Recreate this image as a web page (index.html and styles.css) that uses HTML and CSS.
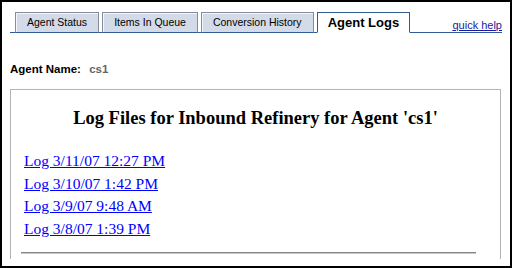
FILE: index.html
```html
<!DOCTYPE html>
<html lang="en">
<head>
    <meta charset="UTF-8">
    <title>Agent Logs</title>
    <link rel="stylesheet" href="styles.css">
</head>
<body>

<div class="frame">
    <div class="tabbar">
        <a class="tab" href="#">Agent Status</a>
        <a class="tab" href="#">Items In Queue</a>
        <a class="tab" href="#">Conversion History</a>
        <a class="tab active" href="#">Agent Logs</a>
        <a class="help" href="#">quick help</a>
    </div>
    <div class="page">
        <div class="agent-row">
            <span class="agent-label">Agent Name:</span>
            <span class="agent-value">cs1</span>
        </div>
        <div class="log-box">
            <h3>Log Files for Inbound Refinery for Agent 'cs1'</h3>
            <div class="log-list">
                <a href="#">Log 3/11/07 12:27 PM</a>
                <a href="#">Log 3/10/07 1:42 PM</a>
                <a href="#">Log 3/9/07 9:48 AM</a>
                <a href="#">Log 3/8/07 1:39 PM</a>
            </div>
            <hr>
        </div>
    </div>
</div>

</body>
</html>
```

FILE: styles.css
```css
html, body {
    margin: 0;
    padding: 0;
    background-color: white;
}
.frame {
    width: 512px;
    height: 268px;
    box-sizing: border-box;
    border: 2px solid #000;
    padding: 10px 8px 7px 8px;
    display: flex;
    flex-direction: column;
    font-family: "Liberation Sans", Arial, sans-serif;
}
.tabbar {
    display: flex;
    align-items: flex-end;
    border-bottom: 1px solid #2f5b92;
    padding-left: 5px;
    height: 20px;
}
.tab {
    height: 19px;
    line-height: 19px;
    padding: 0 11px;
    margin-right: 3px;
    margin-bottom: -1px;
    border: 1px solid #868c99;
    border-bottom-color: #2f5b92;
    background-color: #d3dbe9;
    box-shadow: inset 1px 1px 0 #f4f6fa;
    color: #000;
    font-size: 10.5px;
    text-decoration: none;
}
.tab.active {
    padding: 0 10px;
    border-color: #2f5b92;
    border-bottom: 1px solid white;
    background-color: white;
    box-shadow: none;
    font-size: 13px;
    font-weight: bold;
}
.help {
    margin-left: auto;
    margin-bottom: 1px;
    font-size: 11px;
    color: #1b1ba0;
}
.page {
    flex: 1;
    overflow: hidden;
}
.agent-row {
    margin-top: 29px;
    line-height: 14px;
    font-size: 11.5px;
    font-weight: bold;
}
.agent-value {
    margin-left: 5px;
    color: #666;
}
.log-box {
    margin-top: 13px;
    margin-right: 1px;
    height: 240px;
    border: 1px solid #b4b4b4;
    padding: 0 13px;
    font-family: "Liberation Serif", "Times New Roman", serif;
}
.log-box h3 {
    margin: 17px 0 0 0;
    text-align: center;
    font-size: 18.5px;
    line-height: 22px;
}
.log-list {
    margin-top: 21px;
}
.log-list a {
    display: block;
    font-size: 15.5px;
    line-height: 22.67px;
    color: #00f;
}
hr {
    margin: 11px 11px 0 -3px;
    height: 0;
    border: none;
    border-top: 1px solid #858585;
    border-bottom: 1px solid #c8c8c8;
}
```
